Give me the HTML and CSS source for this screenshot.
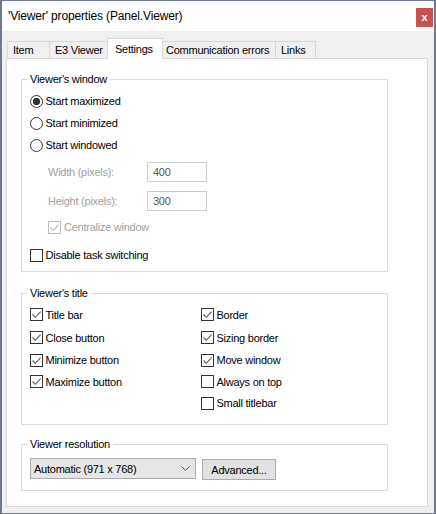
FILE: index.html
```html
<!DOCTYPE html>
<html>
<head>
<meta charset="utf-8">
<title>'Viewer' properties (Panel.Viewer)</title>
<link rel="stylesheet" href="styles.css">
</head>
<body>
<div class="window">
  <div class="titlebar">
    <span class="title">'Viewer' properties (Panel.Viewer)</span>
    <span class="close">x</span>
  </div>
  <div class="client">
    <div class="tabs">
      <div class="tab t-item">Item</div>
      <div class="tab t-e3">E3 Viewer</div>
      <div class="tab t-settings active">Settings</div>
      <div class="tab t-comm">Communication errors</div>
      <div class="tab t-links">Links</div>
    </div>
    <div class="panel">
      <fieldset class="group g-window">
        <legend>Viewer's window</legend>
        <div class="gbody body-window">
          <div class="row"><span class="radio on"></span>Start maximized</div>
          <div class="row"><span class="radio"></span>Start minimized</div>
          <div class="row"><span class="radio"></span>Start windowed</div>
          <div class="dim dim-first"><span class="dlabel">Width (pixels):</span><span class="edit">400</span></div>
          <div class="dim dim-second"><span class="dlabel">Height (pixels):</span><span class="edit">300</span></div>
          <div class="row centralize"><span class="check dis"><svg viewBox="0 0 11 11" width="11" height="11"><path d="M1.5 5.5 L4.3 8.3 L9.6 2.6" fill="none" stroke="#bcbcbc" stroke-width="1.1"/></svg></span>Centralize window</div>
          <div class="row task"><span class="check"></span>Disable task switching</div>
        </div>
      </fieldset>
      <fieldset class="group g-title">
        <legend>Viewer's title</legend>
        <div class="gbody body-title">
          <div class="cell"><span class="check"><svg viewBox="0 0 11 11" width="11" height="11"><path d="M1.5 5.5 L4.3 8.3 L9.6 2.6" fill="none" stroke="#5a5a5a" stroke-width="1.1"/></svg></span>Title bar</div>
          <div class="cell"><span class="check"><svg viewBox="0 0 11 11" width="11" height="11"><path d="M1.5 5.5 L4.3 8.3 L9.6 2.6" fill="none" stroke="#5a5a5a" stroke-width="1.1"/></svg></span>Border</div>
          <div class="cell"><span class="check"><svg viewBox="0 0 11 11" width="11" height="11"><path d="M1.5 5.5 L4.3 8.3 L9.6 2.6" fill="none" stroke="#5a5a5a" stroke-width="1.1"/></svg></span>Close button</div>
          <div class="cell"><span class="check"><svg viewBox="0 0 11 11" width="11" height="11"><path d="M1.5 5.5 L4.3 8.3 L9.6 2.6" fill="none" stroke="#5a5a5a" stroke-width="1.1"/></svg></span>Sizing border</div>
          <div class="cell"><span class="check"><svg viewBox="0 0 11 11" width="11" height="11"><path d="M1.5 5.5 L4.3 8.3 L9.6 2.6" fill="none" stroke="#5a5a5a" stroke-width="1.1"/></svg></span>Minimize button</div>
          <div class="cell"><span class="check"><svg viewBox="0 0 11 11" width="11" height="11"><path d="M1.5 5.5 L4.3 8.3 L9.6 2.6" fill="none" stroke="#5a5a5a" stroke-width="1.1"/></svg></span>Move window</div>
          <div class="cell"><span class="check"><svg viewBox="0 0 11 11" width="11" height="11"><path d="M1.5 5.5 L4.3 8.3 L9.6 2.6" fill="none" stroke="#5a5a5a" stroke-width="1.1"/></svg></span>Maximize button</div>
          <div class="cell"><span class="check"></span>Always on top</div>
          <div class="cell"></div>
          <div class="cell"><span class="check"></span>Small titlebar</div>
        </div>
      </fieldset>
      <fieldset class="group g-res">
        <legend>Viewer resolution</legend>
        <div class="gbody body-res">
          <div class="select"><span>Automatic (971 x 768)</span><svg class="chev" viewBox="0 0 9 5" width="9" height="5"><path d="M0.5 0.5 L4.5 4.5 L8.5 0.5" fill="none" stroke="#555" stroke-width="1"/></svg></div>
          <div class="button">Advanced...</div>
        </div>
      </fieldset>
    </div>
  </div>
</div>
</body>
</html>
```
FILE: styles.css
```css
* { box-sizing: border-box; }
html, body { margin: 0; padding: 0; background: #ffffff; }
body {
  font-family: "Liberation Sans", Arial, sans-serif;
  font-size: 11px;
  letter-spacing: -0.25px;
  color: #000;
}
.window {
  width: 436px;
  height: 514px;
  border-style: solid;
  border-color: #6f7b88;
  border-width: 1px 2px 1px 2px;
  display: flex;
  flex-direction: column;
  background: #f0f0f0;
}
.titlebar {
  height: 30px;
  flex: none;
  background: #ffffff;
  display: flex;
  align-items: center;
  padding-left: 6px;
}
.title {
  font-size: 12px;
  letter-spacing: -0.15px;
  color: #000;
}
.close {
  align-self: flex-start;
  margin: 7px 1px 0 auto;
  width: 17px;
  height: 19px;
  background: #c75050;
  color: #fff;
  font-weight: bold;
  font-size: 11px;
  letter-spacing: 0;
  display: flex;
  align-items: center;
  justify-content: center;
  padding-bottom: 1px;
}
.client {
  flex: 1;
  display: flex;
  flex-direction: column;
  padding: 7px 6px 6px 0;
  background: #f0f0f0;
}
.tabs {
  display: flex;
  align-items: flex-end;
  height: 21px;
  margin: 0 0 -1px 5px;
  position: relative;
  z-index: 1;
}
.tab {
  height: 17px;
  margin-bottom: 1px;
  margin-left: -1px;
  border: 1px solid #d9d9d9;
  border-bottom: 0;
  background: #f0f0f0;
  display: flex;
  align-items: center;
  padding-left: 5px;
  white-space: nowrap;
}
.t-item { margin-left: 0; width: 43px; }
.t-e3 { width: 59px; }
.t-settings { width: 56px; }
.t-comm { width: 114px; padding-left: 3px; }
.t-links { width: 41px; }
.tab.active {
  height: 21px;
  margin-bottom: 0;
  background: #ffffff;
  padding-left: 7px;
  padding-bottom: 1px;
}
.panel {
  flex: 1;
  margin-left: 4px;
  background: #ffffff;
  border: 1px solid #d9d9d9;
  padding: 13px 0 0 14px;
}
.group {
  margin: 0;
  padding: 0;
  min-width: 0;
  width: 367px;
  border: 1px solid #dcdcdc;
}
.g-window { margin-bottom: 14px; }
.g-title { margin-bottom: 12px; }
legend {
  padding: 0 3px;
  margin-left: 5px;
  line-height: 14px;
  height: 14px;
}
.gbody { padding-left: 8px; }
.body-window { padding-top: 4px; padding-bottom: 5px; }
.row {
  display: flex;
  align-items: center;
  height: 22px;
  white-space: nowrap;
}
.radio {
  width: 13px;
  height: 13px;
  border: 1px solid #333;
  border-radius: 50%;
  background: #fff;
  margin-right: 2.5px;
  flex: none;
}
.radio.on {
  background: radial-gradient(circle, #333 0, #333 3.4px, #fff 3.9px);
}
.check {
  width: 13px;
  height: 13px;
  border: 1px solid #333;
  background: #fff;
  margin-right: 2.5px;
  flex: none;
  display: flex;
}
.check svg { display: block; }
.check.dis { border-color: #bcbcbc; }
.dim {
  display: flex;
  align-items: center;
  height: 20px;
  margin-left: 18px;
}
.dim-first { margin-top: 6px; }
.dim-second { margin-top: 9px; }
.dlabel {
  width: 99px;
  color: #a0a0a0;
  white-space: nowrap;
}
.edit {
  width: 60px;
  height: 20px;
  border: 1px solid #cccccc;
  background: #fff;
  padding-left: 5px;
  display: flex;
  align-items: center;
  color: #555;
}
.centralize {
  margin-top: 5px;
  margin-left: 18px;
  color: #a0a0a0;
}
.centralize .check { margin-right: 3px; }
.task { margin-top: 6px; }
.body-title {
  display: grid;
  grid-template-columns: 171px 1fr;
  grid-template-rows: 23px 23px 22px 21px 22px;
  padding-top: 3px;
  padding-bottom: 10px;
}
.cell {
  display: flex;
  align-items: center;
  white-space: nowrap;
}
.body-res {
  display: flex;
  align-items: flex-start;
  gap: 6px;
  padding-top: 7px;
  padding-bottom: 10px;
}
.select {
  width: 166px;
  height: 21px;
  border: 1px solid #adadad;
  background: #e5e5e5;
  display: flex;
  align-items: center;
  justify-content: space-between;
  padding: 0 5px 0 3px;
  white-space: nowrap;
}
.chev { display: block; }
.button {
  width: 74px;
  height: 21px;
  margin-top: 1px;
  border: 1px solid #adadad;
  background: #e1e1e1;
  display: flex;
  align-items: center;
  justify-content: center;
  white-space: nowrap;
}
```
